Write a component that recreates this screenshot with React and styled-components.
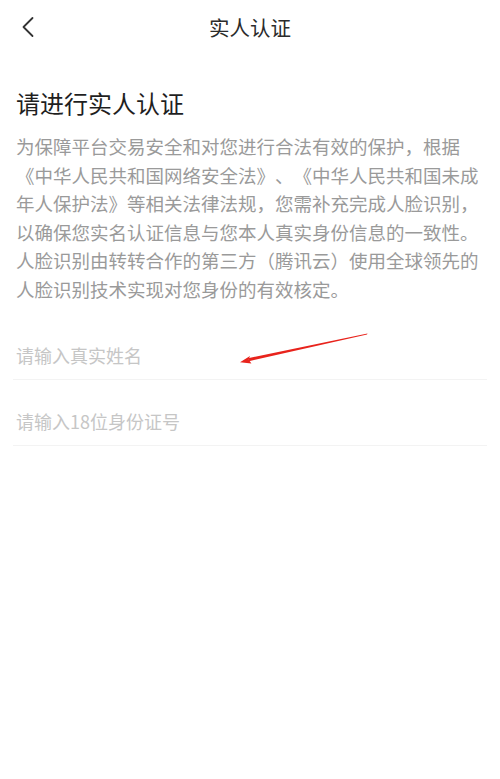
import React from 'react'
import styled, { createGlobalStyle } from 'styled-components'

const GlobalStyle = createGlobalStyle`
    html, body {
        margin: 0;
        padding: 0;
        background: #fff;
    }
    body {
        font-family: "Noto Sans CJK SC", "Noto Sans", sans-serif;
        text-spacing-trim: space-all;
    }
`
const Page = styled.div`
    position: relative;
    width: 500px;
    min-height: 779px;
    background: #fff;
`
const Header = styled.header`
    display: grid;
    grid-template-columns: 60px 1fr 60px;
    align-items: center;
    height: 54px;
`
const BackButton = styled.button`
    display: flex;
    align-items: center;
    justify-content: flex-start;
    padding: 0 0 0 21px;
    height: 54px;
    border: none;
    background: none;
    cursor: pointer;
`
const Title = styled.h1`
    margin: 0;
    text-align: center;
    font-size: 20.5px;
    font-weight: 400;
    color: #2b2b2b;
    line-height: 54px;
`
const Content = styled.main`
    padding: 0 16px;
`
const Heading = styled.h2`
    margin: 33px 0 13px;
    font-size: 24px;
    font-weight: 400;
    line-height: 32px;
    color: #1f1f1f;
`
const Desc = styled.p`
    margin: 0;
    font-size: 18.5px;
    line-height: 28.5px;
    color: #9a9a9a;
    text-spacing-trim: space-all;
`
const Form = styled.form`
    margin: 11px -3px 0;
`
const Field = styled.div`
    padding: 30px 3px 13px;
    border-bottom: 1px solid #f3f3f3;
`
const Input = styled.input`
    display: block;
    width: 100%;
    border: none;
    outline: none;
    padding: 0;
    font-family: inherit;
    font-size: 18px;
    line-height: 22px;
    height: 22px;
    color: #333;
    background: transparent;

    &::placeholder {
        color: #c6c6c6;
    }
`
const Arrow = styled.svg`
    position: absolute;
    left: 230px;
    top: 325px;
    pointer-events: none;
`

const App = () => {
  return (
    <Page>
        <GlobalStyle />
        <Header>
            <BackButton aria-label="返回">
                <svg width="14" height="22" viewBox="0 0 14 22">
                    <path d="M11.5 2 L2.5 11 L11.5 20" fill="none" stroke="#333" strokeWidth="1.8" strokeLinecap="round" strokeLinejoin="round" />
                </svg>
            </BackButton>
            <Title>实人认证</Title>
            <span />
        </Header>
        <Content>
            <Heading>请进行实人认证</Heading>
            <Desc>
                为保障平台交易安全和对您进行合法有效的保护，根据《中华人民共和国网络安全法》、《中华人民共和国未成年人保护法》等相关法律法规，您需补充完成人脸识别，以确保您实名认证信息与您本人真实身份信息的一致性。人脸识别由转转合作的第三方（腾讯云）使用全球领先的人脸识别技术实现对您身份的有效核定。
            </Desc>
            <Form onSubmit={e => e.preventDefault()}>
                <Field>
                    <Input type="text" placeholder="请输入真实姓名" />
                </Field>
                <Field>
                    <Input type="text" placeholder="请输入18位身份证号" />
                </Field>
            </Form>
        </Content>
        <Arrow width="150" height="45" viewBox="0 0 150 45">
            <path d="M137.5 8.6 L137 9.4 L19 36.2 L18 33.2 Z" fill="#e8231c" />
            <path d="M10 37.2 L20 31 L18.6 34.6 L21.4 38.6 Z" fill="#e8231c" />
        </Arrow>
    </Page>
  )
}

export default App
